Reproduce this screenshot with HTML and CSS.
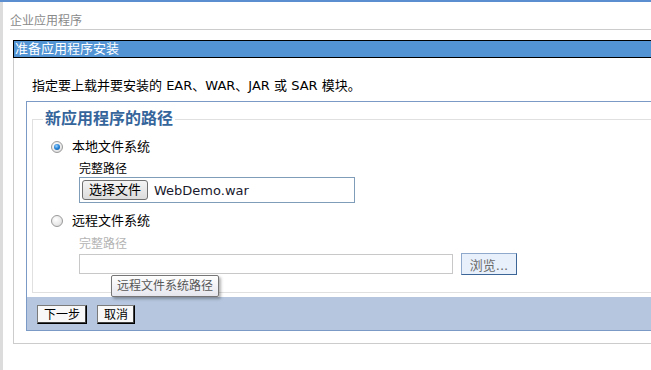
FILE: index.html
```html
<!DOCTYPE html>
<html lang="zh-CN">

<head>
    <meta charset="UTF-8">
    <meta name="viewport" content="width=device-width, initial-scale=1.0">
    <title>企业应用程序</title>
    <link rel="stylesheet" href="styles.css">
</head>

<body>
    <div class="shell">
        <div class="frame-edge"></div>
        <div class="page">
            <div class="page-title">企业应用程序</div>
            <div class="panel">
                <div class="panel-head">准备应用程序安装</div>
                <div class="panel-body">
                    <p class="intro">指定要上载并要安装的 EAR、WAR、JAR 或 SAR 模块。</p>
                    <div class="install-box">
                        <fieldset class="path-set">
                            <legend>新应用程序的路径</legend>
                            <label class="choice">
                                <input type="radio" name="source" checked>
                                <span>本地文件系统</span>
                            </label>
                            <div class="path-field">
                                <div class="field-label">完整路径</div>
                                <div class="file-box">
                                    <span class="file-btn">选择文件</span>
                                    <span class="file-name">WebDemo.war</span>
                                </div>
                            </div>
                            <label class="choice remote">
                                <input type="radio" name="source">
                                <span>远程文件系统</span>
                            </label>
                            <div class="path-field remote-field">
                                <div class="field-label disabled">完整路径</div>
                                <div class="remote-row">
                                    <input type="text" class="remote-input" disabled>
                                    <button class="browse-btn" disabled>浏览...</button>
                                    <div class="tooltip">远程文件系统路径</div>
                                </div>
                            </div>
                        </fieldset>
                        <div class="actions">
                            <button class="action-btn">下一步</button>
                            <button class="action-btn">取消</button>
                        </div>
                    </div>
                </div>
            </div>
        </div>
    </div>
</body>

</html>
```

FILE: styles.css
```css
body {
    margin: 0;
    overflow: hidden;
    background-color: #ffffff;
    border-top: 2px solid #5b8ed0;
    font-family: "DejaVu Sans", "Noto Sans CJK SC", sans-serif;
    font-size: 13px;
    color: #000000;
}

.shell {
    display: flex;
    height: 368px;
}

.frame-edge {
    width: 3px;
    flex-shrink: 0;
    background-color: #dcdcdc;
}

.page {
    flex: 1;
    min-width: 0;
    padding-left: 7px;
}

.page-title {
    margin-top: 11px;
    height: 16px;
    line-height: 16px;
    font-size: 12px;
    color: #8a8a8a;
    border-bottom: 1px solid #cccccc;
}

.panel {
    margin: 10px 0 0 3px;
    border-left: 1px solid #cccccc;
    border-bottom: 1px solid #cccccc;
}

.panel-head {
    margin-left: -1px;
    height: 16px;
    line-height: 16px;
    padding-left: 1px;
    border: 1px solid #000000;
    border-right: none;
    background-color: #5294d4;
    color: #ffffff;
    font-size: 13px;
}

.panel-body {
    padding: 20px 0 12px 12px;
}

.intro {
    margin: 0 0 7px 0;
    padding-left: 6px;
    line-height: 16px;
}

.install-box {
    border: 1px solid #7b9ac6;
    border-right: none;
}

.path-set {
    margin: 8px 0 0 5px;
    padding: 10px 0 17px 10px;
    border: 1px solid #e0e0e0;
    border-right: none;
    min-width: 0;
}

.path-set legend {
    padding: 0 2px;
    font-size: 16px;
    line-height: 18px;
    font-weight: bold;
    color: #35659b;
}

.choice {
    display: flex;
    align-items: center;
    gap: 9px;
    height: 18px;
    margin-left: 8px;
    line-height: 18px;
}

.choice.remote {
    margin-top: 9px;
}

.choice input {
    appearance: none;
    margin: 0;
    width: 12px;
    height: 12px;
    border-radius: 50%;
    border: 1px solid #9a9a9a;
    background: radial-gradient(circle at 40% 35%, #ffffff 0%, #e8e8e8 60%, #cfcfcf 100%);
    display: flex;
    align-items: center;
    justify-content: center;
}

.choice input:checked::after {
    content: "";
    width: 6px;
    height: 6px;
    border-radius: 50%;
    background: radial-gradient(circle at 40% 35%, #9fd4ff 0%, #2a86d8 45%, #0b4f9a 100%);
}

.path-field {
    margin: 5px 0 0 36px;
}

.remote-field {
    margin-top: 6px;
}

.field-label {
    height: 16px;
    line-height: 16px;
    font-size: 12px;
}

.field-label.disabled {
    color: #b4b4b4;
}

.file-box {
    display: flex;
    align-items: center;
    width: 274px;
    height: 24px;
    border: 1px solid #7f9db9;
}

.file-btn {
    margin-left: 2px;
    height: 18px;
    line-height: 18px;
    padding: 0 6px;
    border: 1px solid #707070;
    border-radius: 3px;
    background: linear-gradient(#f4f4f4, #dcdcdc);
    font-size: 13px;
}

.file-name {
    margin-left: 6px;
    color: #1a1a2e;
}

.remote-row {
    position: relative;
    display: flex;
    align-items: flex-start;
    margin-top: 1px;
}

.remote-input {
    margin: 1px 0 0 0;
    width: 372px;
    height: 18px;
    padding: 0;
    border: 1px solid #c8c8c8;
    background-color: #ffffff;
}

.browse-btn {
    margin-left: 8px;
    width: 56px;
    height: 22px;
    padding: 0;
    border: 1px solid;
    border-color: #8fa9cc #3b6597 #3b6597 #8fa9cc;
    background-color: #e8f0fb;
    color: #6a6a6a;
    font-family: inherit;
    font-size: 13px;
}

.tooltip {
    position: absolute;
    left: 32px;
    top: 22px;
    width: 101px;
    height: 20px;
    line-height: 20px;
    padding-left: 5px;
    border: 1px solid #767676;
    border-radius: 2px;
    background: linear-gradient(#ffffff, #e6e7ee);
    box-shadow: 2px 2px 3px rgba(0, 0, 0, 0.3);
    color: #575757;
    font-size: 12px;
    white-space: nowrap;
}

.actions {
    display: flex;
    gap: 10px;
    margin-top: 4px;
    height: 33px;
    padding-left: 10px;
    box-sizing: border-box;
    padding-top: 8px;
    background-color: #b5c6de;
}

.action-btn {
    height: 19px;
    padding: 0 6px;
    border: 1px solid;
    border-color: #7a7a7a #000000 #000000 #7a7a7a;
    box-shadow: inset -1px -1px 0 #404040;
    background-color: #f8f8f8;
    color: #000000;
    font-family: inherit;
    font-size: 12px;
    line-height: 16px;
}
```
